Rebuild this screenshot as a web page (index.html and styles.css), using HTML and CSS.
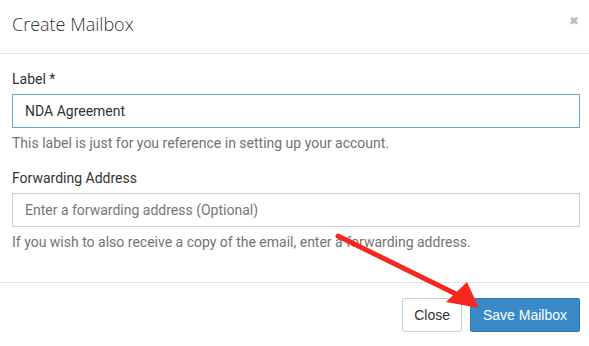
FILE: index.html
```html
<html>
    <head>
        <title>Create Mailbox</title>
        <link rel="stylesheet" href="styles.css">
    </head>

    <body>
        <!-- Modal -->
        <div class="modal">
            <div class="modal-header">
                <div class="modal-title">Create Mailbox</div>
                <span class="close-x">&#10006;</span>
            </div>

            <div class="modal-body">
                <div class="form-group">
                    <label>Label *</label>
                    <input class="field focused" type="text" value="NDA Agreement">
                    <div class="help">This label is just for you reference in setting up your account.</div>
                </div>
                <div class="form-group">
                    <label>Forwarding Address</label>
                    <input class="field" type="text" placeholder="Enter a forwarding address (Optional)">
                    <div class="help">If you wish to also receive a copy of the email, enter a forwarding address.</div>
                </div>
            </div>

            <div class="modal-footer">
                <button class="btn">Close</button>
                <button class="btn btn-primary">Save Mailbox</button>
            </div>
        </div>

        <!-- Annotation arrow -->
        <svg class="arrow" width="589" height="346" viewBox="0 0 589 346">
            <line x1="338" y1="236" x2="458" y2="295" stroke="#f5271f" stroke-width="5" stroke-linecap="round"/>
            <polygon points="446,302 467,282 479,308" fill="#f5271f"/>
        </svg>
    </body>
</html>
```

FILE: styles.css
```css
/* Page */
body {
    margin: 0;
    background: #fff;
    font-family: Roboto, "Liberation Sans", sans-serif;
    color: #333;
}
.modal {
    width: 589px;
}

/* Header */
.modal-header {
    height: 53px;
    padding: 0 12px;
    border-bottom: 1px solid #e5e5e5;
    display: flex;
    align-items: center;
    justify-content: space-between;
}
.modal-title {
    font-family: "Open Sans", sans-serif;
    font-weight: 300;
    font-size: 18px;
    color: #333;
    margin-top: -5px;
}
.close-x {
    font-size: 12px;
    color: #bdbdbd;
    margin-top: -12px;
    margin-right: -2px;
    font-family: "DejaVu Sans", sans-serif;
}

/* Body */
.modal-body {
    padding: 15px 9px 30px 12px;
}
.form-group + .form-group {
    margin-top: 15px;
}
label {
    display: block;
    font-size: 14px;
    line-height: 20px;
    margin-bottom: 5px;
    color: #333;
}
.field {
    display: block;
    width: 100%;
    height: 34px;
    box-sizing: border-box;
    padding: 0 12px;
    border: 1px solid #ccc;
    font-family: Roboto, sans-serif;
    font-size: 14px;
    color: #333;
    outline: none;
}
.field::placeholder {
    color: #777;
}
.field.focused {
    border-color: #5ea8e3;
}
.help {
    margin-top: 5px;
    font-size: 14px;
    line-height: 20px;
    color: #737373;
}

/* Footer */
.modal-footer {
    border-top: 1px solid #e5e5e5;
    padding: 15px 9px 14px 12px;
    display: flex;
    justify-content: flex-end;
    gap: 8px;
}
.btn {
    height: 34px;
    padding: 0 11px;
    font-family: "Liberation Sans", Arial, sans-serif;
    font-size: 14px;
    color: #333;
    background: #fff;
    border: 1px solid #ccc;
    border-radius: 2px;
}
.btn-primary {
    padding: 0 12px;
    color: #fff;
    background: #3a89c9;
    border-color: #2f78b4;
}

/* Arrow overlay */
.arrow {
    position: absolute;
    left: 0;
    top: 0;
}
```
